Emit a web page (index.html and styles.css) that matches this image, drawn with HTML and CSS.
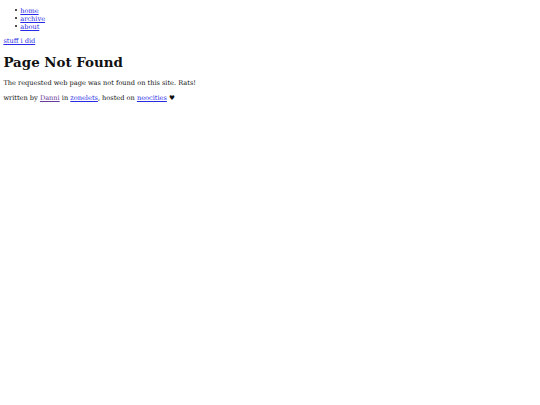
FILE: index.html
```html
<!DOCTYPE html>
<html>
<head>
<meta charset="utf-8">
<title>Page Not Found</title>
<link rel="stylesheet" href="styles.css">
</head>
<body class="page">
<nav class="site-nav">
<ul class="nav-list">
<li class="nav-item"><a class="link" href="#">home</a></li>
<li class="nav-item"><a class="link" href="#">archive</a></li>
<li class="nav-item"><a class="link" href="#">about</a></li>
</ul>
</nav>
<p class="site-title"><a class="link" href="#">stuff i did</a></p>
<main>
<h1 class="title">Page Not Found</h1>
<p class="text">The requested web page was not found on this site. Rats!</p>
<p class="text">written by <a class="link visited" href="#">Danni</a> in <a class="link" href="#">zonelets</a>, hosted on <a class="link" href="#">neocities</a> ♥</p>
</main>
</body>
</html>
```

FILE: styles.css
```css
html {
  background: #ffffff;
}
.page {
  margin: 0 3.4px 3.4px;
  padding-top: 1px;
  font-family: "DejaVu Serif", serif;
  font-size: 6.6px;
  line-height: 7.9px;
  color: #111111;
}
.nav-list {
  margin: 6.75px 0;
  padding-left: 16.9px;
  list-style: none;
}
.nav-item::before {
  content: "";
  display: inline-block;
  width: 2px;
  height: 2px;
  border-radius: 50%;
  background: #111111;
  margin-left: -5px;
  margin-right: 3px;
  vertical-align: 1.5px;
}
.site-title {
  margin: 6.75px 0;
}
.title {
  font-size: 13.4px;
  line-height: 15.7px;
  margin: 8.5px 0 9.5px;
  font-weight: bold;
}
.text {
  margin: 7.6px 0;
}
.link {
  color: #2a2ae6;
  text-decoration: underline;
}
.link.visited {
  color: #6a3a98;
}
```
